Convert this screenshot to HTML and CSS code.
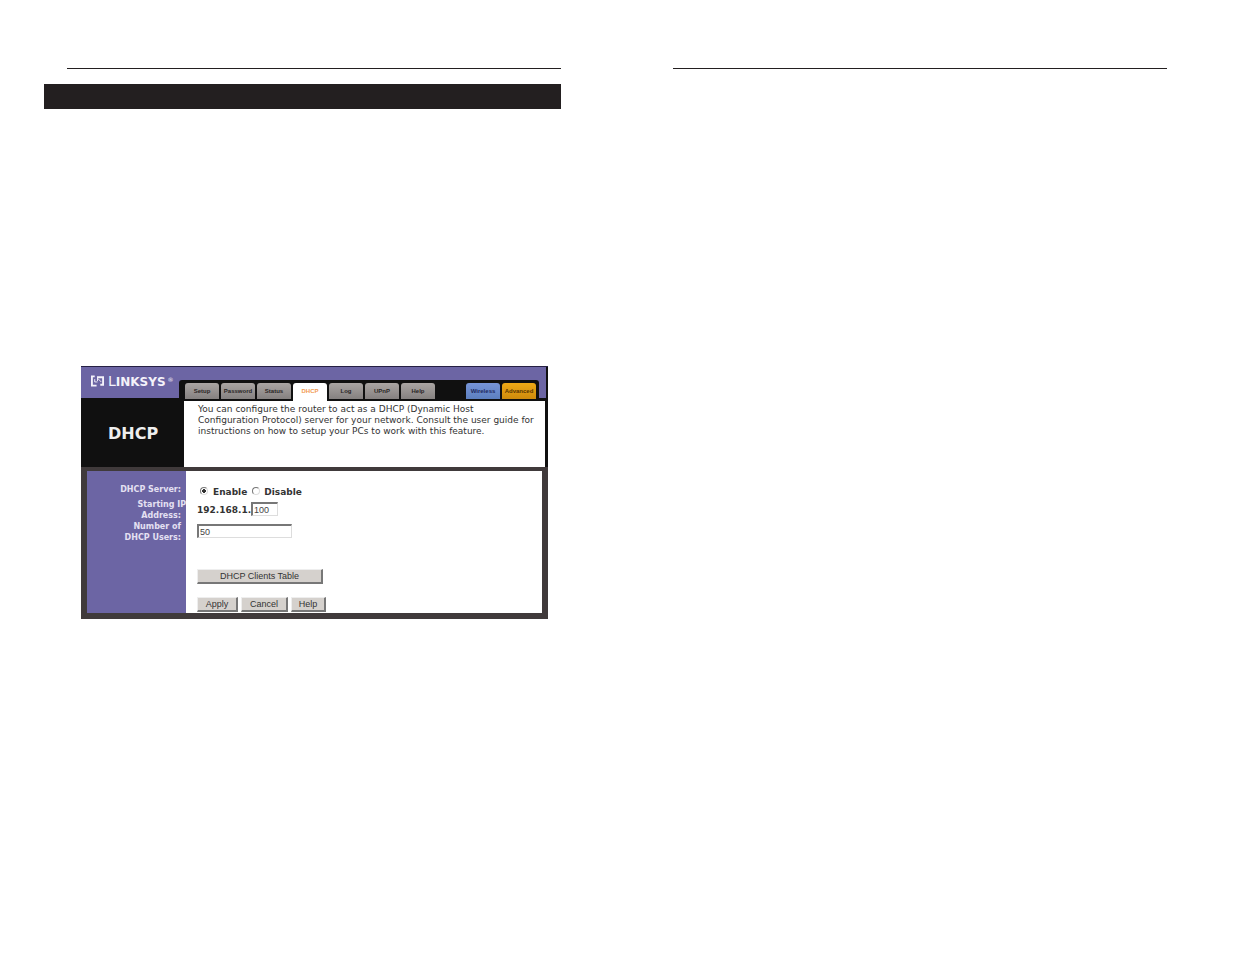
FILE: index.html
```
<!DOCTYPE html>
<html lang="en">
<head>
<meta charset="utf-8">
<title>DHCP</title>
<link rel="stylesheet" href="styles.css">
</head>
<body>
<div class="spread">
  <section class="page">
    <div class="rule rule-inset"></div>
    <div class="band"></div>
    <main class="router">
      <header class="top">
        <div class="logo">
          <svg class="mark" viewBox="0 0 14 12" aria-hidden="true"><path d="M4 1H1v10h5" stroke-width="2"/><path d="M7 2h6v8h-3" stroke-width="2"/><path d="M7 1v5M4 4v3h3M7 3l4 4" stroke-width="1"/></svg>
          <span class="brand">L<span class="small">INKSYS</span></span><span class="reg">®</span>
        </div>
        <nav class="tabs">
          <a class="tab" href="#">Setup</a>
          <a class="tab" href="#">Password</a>
          <a class="tab" href="#">Status</a>
          <a class="tab active" href="#">DHCP</a>
          <a class="tab" href="#">Log</a>
          <a class="tab" href="#">UPnP</a>
          <a class="tab" href="#">Help</a>
          <a class="tab wireless" href="#">Wireless</a>
          <a class="tab advanced" href="#">Advanced</a>
        </nav>
      </header>
      <div class="intro">
        <h1 class="title">DHCP</h1>
        <p class="description">You can configure the router to act as a DHCP (Dynamic Host Configuration Protocol) server for your network. Consult the user guide for instructions on how to setup your PCs to work with this feature.</p>
      </div>
      <form class="settings">
        <div class="labels">
          <span class="label" id="server">DHCP Server:</span>
          <label class="label wide" for="start">Starting IP</label>
          <label class="label" for="start">Address:</label>
          <label class="label users" for="users">Number of<br>DHCP Users:</label>
        </div>
        <div class="fields">
          <div class="row" role="radiogroup" aria-labelledby="server">
            <label class="choice"><input class="radio" type="radio" name="dhcp" checked>Enable</label>
            <label class="choice"><input class="radio" type="radio" name="dhcp">Disable</label>
          </div>
          <div class="row address">192.168.1.<input class="text short" id="start" type="text" value="100"></div>
          <div class="row"><input class="text long" id="users" type="text" value="50"></div>
          <button class="button clients" type="button">DHCP Clients Table</button>
          <div class="actions">
            <button class="button apply" type="button">Apply</button>
            <button class="button cancel" type="button">Cancel</button>
            <button class="button help" type="button">Help</button>
          </div>
        </div>
      </form>
    </main>
  </section>
  <section class="page">
    <div class="rule"></div>
  </section>
</div>
</body>
</html>
```
FILE: styles.css
```
* { box-sizing: border-box; }
body { margin: 0; background: #fff; font-family: "DejaVu Sans", Verdana, sans-serif; color: #333; }
.spread { display: grid; grid-template-columns: 517fr 494fr; column-gap: 112px; padding: 68px 68px 0 44px; }
.page { min-width: 0; }
.rule { height: 1px; background: #231f20; }
.rule-inset { margin-left: 23px; }
.band { height: 25px; margin-top: 15px; background: #231f20; }
.router { margin: 257px 13px 0 37px; background: #101010; border-top: 1px solid #252044; }

.top { display: flex; margin-right: 2px; background: linear-gradient(#6c65a4 31px, #101010 31px); }
.logo { flex: 0 0 98px; display: flex; align-items: flex-start; padding: 8px 0 0 10px; color: #f4f2fa; }
.mark { width: 13px; height: 12px; margin-right: 4px; fill: none; stroke: #f4f2fa; }
.brand { font: 14px/13px "DejaVu Sans", sans-serif; }
.small { font-size: 12px; line-height: 12px; font-weight: bold; }
.reg { margin-left: 2px; font-size: 6px; line-height: 9px; }
.tabs { flex: 1; display: flex; gap: 2px; margin: 13px 7px 0 0; padding: 3px 3px 0 6px; background: #101010; border-radius: 3px 3px 0 0; }
.tab { flex: 1 1 34px; min-width: 0; height: 16px; margin-bottom: 2px; border-radius: 3px 3px 0 0; background: linear-gradient(#aaa5a3, #858180); color: #292525; font: bold 6px/16px "Liberation Sans", Arial, sans-serif; text-align: center; text-decoration: none; white-space: nowrap; }
.active { height: 18px; margin-bottom: 0; background: #fff; color: #f29a51; }
.wireless { margin-left: 29px; background: linear-gradient(#7795d8, #5c7fbf); color: #1d2860; }
.advanced { background: linear-gradient(#efaa16, #cd8a0c); color: #5a3500; }

.intro { display: flex; margin-right: 3px; height: 66px; }
.title { flex: 0 0 103px; margin: 0; padding: 24px 0 0 27px; color: #eee; font-size: 16px; line-height: 18px; }
.description { flex: 1; margin: 0; padding: 3px 10px 0 14px; background: #fff; font-size: 9px; line-height: 11px; }

.settings { display: flex; min-height: 152px; border: solid #403a3b; border-width: 4px 6px 6px; }
.labels { flex: 0 0 99px; padding: 13px 5px 0 0; background: #6c65a4; color: #e4e0f2; text-align: right; font-size: 8px; line-height: 11px; font-weight: bold; }
.label { display: block; }
.wide { margin: 4px -5px 0 0; }
.fields { flex: 1; padding: 14px 0 0 11px; background: #fff; font-size: 9px; line-height: 14px; font-weight: bold; }
.row { display: flex; align-items: center; height: 14px; }
.choice { display: flex; align-items: center; margin-right: 5px; }
.radio { appearance: none; width: 8px; height: 8px; margin: 0 5px 3px 3px; border: 1px solid; border-color: #777 #ddd #ddd #777; border-radius: 50%; background: #fff; }
.choice + .choice .radio { margin: 0 4px 3px 0; }
.radio:checked { background: radial-gradient(#333 0 2px, #fff 2px); }
.address { height: 22px; }
.text { height: 14px; padding: 0 0 0 1px; border: 1px solid; border-color: #777 #ddd #ddd #777; border-width: 2px 1px 1px 2px; border-radius: 0; background: #fff; color: #444; font: 9px "Liberation Sans", Arial, sans-serif; }
.short { width: 27px; margin: 0 0 2px 0; }
.long { width: 95px; margin-top: 6px; }
.button { height: 15px; padding: 0; border: 1px solid; border-color: #eee #777 #777 #eee; border-width: 1px 2px 2px 1px; border-radius: 0; background: #d5d1cd; color: #333; font: 9px/12px "Liberation Sans", Arial, sans-serif; }
.clients { display: block; width: 126px; margin-top: 34px; }
.actions { display: flex; gap: 3px; margin-top: 13px; }
.apply { width: 41px; }
.cancel { width: 47px; }
.help { width: 35px; }
```
